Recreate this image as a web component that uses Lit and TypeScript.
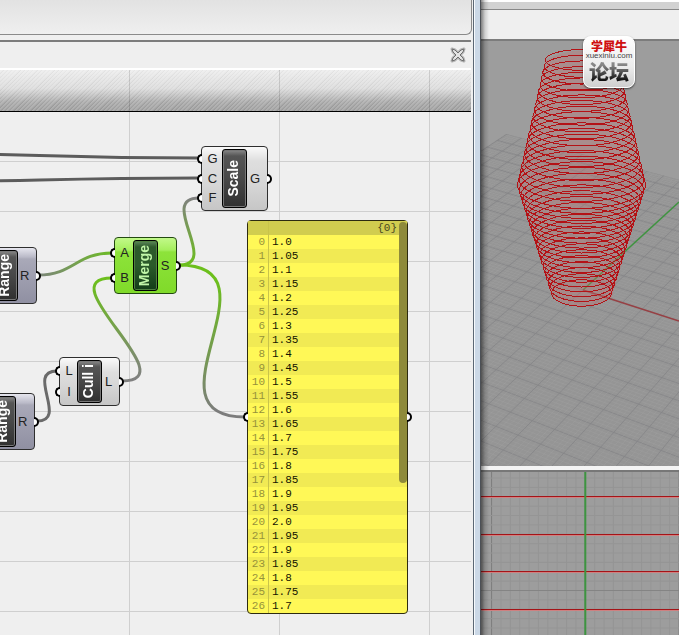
import { LitElement, html, svg, css } from "lit";
import { customElement, property } from "lit/decorators.js";

type Tone = "plain" | "selected" | "slate";

interface GraphNode {
  name: string;
  tone: Tone;
  x: number;
  y: number;
  w: number;
  h: number;
  inputs: string[];
  outputs: string[];
}

interface Wire {
  from: [number, number];
  to: [number, number];
  pull: number;
  stroke: string;
}

const NODES: GraphNode[] = [
  { name: "Scale", tone: "plain", x: 201, y: 34, w: 67, h: 65, inputs: ["G", "C", "F"], outputs: ["G"] },
  { name: "Merge", tone: "selected", x: 114, y: 125, w: 63, h: 57, inputs: ["A", "B"], outputs: ["S"] },
  { name: "Cull i", tone: "plain", x: 59, y: 245, w: 61, h: 49, inputs: ["L", "I"], outputs: ["L"] },
  { name: "Range", tone: "slate", x: -27, y: 135, w: 64, h: 57, inputs: [], outputs: ["R"] },
  { name: "Range", tone: "slate", x: -29, y: 281, w: 64, h: 57, inputs: [], outputs: ["R"] },
];

const WIRES: Wire[] = [
  { from: [-120, 41], to: [199, 46], pull: 150, stroke: "#5c5c5c" },
  { from: [-120, 70], to: [199, 66], pull: 150, stroke: "#5c5c5c" },
  { from: [38, 163], to: [112, 141], pull: 36, stroke: "url(#w-range)" },
  { from: [122, 269], to: [112, 166], pull: 66, stroke: "url(#w-cull)" },
  { from: [37, 309], to: [57, 259], pull: 32, stroke: "#6a6a6a" },
  { from: [179, 153], to: [199, 86], pull: 42, stroke: "url(#w-scale)" },
  { from: [179, 153], to: [245, 305], pull: 106, stroke: "url(#w-panel)" },
];

const VALUES = Array.from({ length: 27 }, (_, i) => {
  const text = (i <= 20 ? 1 + i * 0.05 : 2 - (i - 20) * 0.05).toFixed(2);
  return text.endsWith("0") ? text.slice(0, -1) : text;
});

@customElement("graph-node")
class GraphNodeView extends LitElement {
  @property({ attribute: false }) node!: GraphNode;

  static styles = css`
    :host { display: block; }
    .body {
      box-sizing: border-box; width: 100%; height: 100%;
      display: grid; grid-template-columns: 1fr 25px 1fr;
      padding: 2px 0; border: 1px solid #2e2e2e; border-radius: 4px;
      font: 13px/16px "Liberation Sans", sans-serif; color: #222;
    }
    .plain { background: linear-gradient(#fafafa 0, #dedede 14px, #d6d6d6 60%, #c6c6c6); }
    .slate { background: linear-gradient(#e6e6ee 0, #babac8 9px, #a9a9b8 11px, #9090a2); }
    .selected { background: linear-gradient(#c2f98a 0, #a5ef5d 12px, #8de33a 14px, #80da2a); border-color: #234a10; }
    .side { display: flex; flex-direction: column; }
    .port { flex: 1; position: relative; display: flex; align-items: center; justify-content: center; }
    .outputs .port { padding-right: 4px; }
    .inputs .port { padding-left: 1px; }
    .port::after {
      content: ""; position: absolute; top: calc(50% - 5px);
      box-sizing: border-box; width: 5px; height: 10px;
      border: 2px solid #000; background: #fff;
    }
    .inputs .port::after { right: 100%; border-right: 0; border-radius: 5px 0 0 5px; }
    .outputs .port::after { left: 100%; border-left: 0; border-radius: 0 5px 5px 0; }
    .title {
      display: flex; align-items: center; justify-content: center; overflow: hidden;
      padding-right: 3px;
      border: 1px solid #000; border-radius: 3px; box-shadow: inset 0 0 0 1px #777;
      background: linear-gradient(#8a8a8a 0, #555 6px, #484848 50%, #303030);
      color: #fff; font-weight: bold; font-size: 14px;
    }
    .selected .title {
      background: linear-gradient(#5f8a5c 0, #2d5a2b 6px, #2b5a2a 50%, #123d18);
      box-shadow: inset 0 0 0 1px #4f8040; color: #c0f5a8;
    }
    .title span { writing-mode: vertical-rl; transform: rotate(180deg); white-space: nowrap; }
  `;

  render() {
    const n = this.node;
    return html`
      <div class="body ${n.tone}">
        <div class="side inputs">${n.inputs.map((p) => html`<div class="port">${p}</div>`)}</div>
        <div class="title"><span>${n.name}</span></div>
        <div class="side outputs">${n.outputs.map((p) => html`<div class="port">${p}</div>`)}</div>
      </div>
    `;
  }
}

@customElement("value-panel")
class ValuePanel extends LitElement {
  static styles = css`
    :host { display: block; }
    .panel {
      position: relative; border: 1px solid #2d2b10; border-radius: 4px;
      background: #fff857; font: 11px/14px "Liberation Mono", monospace;
    }
    table { width: 100%; border-collapse: collapse; table-layout: fixed; }
    th, td { height: 14px; padding: 0; font-weight: normal; }
    thead { background: #d1cd4f; }
    .path { text-align: right; padding-right: 10px; color: #4a4820; }
    .index { width: 17px; padding-right: 3px; text-align: right; color: #96923a; border-right: 1px solid #c9c44a; }
    .value { padding-left: 3px; color: #141400; }
    tbody tr:nth-child(even) { background: #f1ea54; }
    .thumb {
      position: absolute; top: 1px; right: 0; width: 8px; height: 66.7%;
      border-radius: 4px; background: #8e8a3a;
    }
    .grip {
      position: absolute; top: calc(50% - 5px); box-sizing: border-box;
      width: 5px; height: 10px; border: 2px solid #000; background: #fff;
    }
    .in { right: 100%; border-right: 0; border-radius: 5px 0 0 5px; }
    .out { left: 100%; border-left: 0; border-radius: 0 5px 5px 0; }
  `;

  render() {
    return html`
      <div class="panel">
        <table>
          <thead><tr><th class="index"></th><th class="path" scope="col">{0}</th></tr></thead>
          <tbody>
            ${VALUES.map((v, i) => html`<tr><th class="index" scope="row">${i}</th><td class="value">${v}</td></tr>`)}
          </tbody>
        </table>
        <div class="thumb"></div>
        <div class="grip in"></div>
        <div class="grip out"></div>
      </div>
    `;
  }
}

@customElement("model-view")
class ModelView extends LitElement {
  static styles = css`
    :host { display: block; overflow: hidden; background: #9d9d9d; }
    svg { display: block; width: 100%; height: 100%; }
    .major { stroke: #868688; stroke-width: 1; stroke-opacity: 0.85; }
    .minor { stroke: #a8a8a8; stroke-width: 1; stroke-opacity: 0.25; }
    .ring { fill: none; stroke: #b41216; stroke-width: 1; shape-rendering: crispEdges; }
  `;

  /* Ground plane: both families of lines run to a point on the horizon. */
  private ground() {
    const horizon = -491;
    const families = [
      { vx: -2189, step: 43 },
      { vx: 909, step: 26 },
    ];
    const reach = (vx: number, x: number) => {
      const k = 1000 / (249 - horizon);
      return [x + (x - vx) * k, 249 + 1000];
    };
    return families.map(({ vx, step }, f) => {
      const lines = [];
      for (let i = -150; i <= 60; i++) {
        const at = 102 + ((f === 0 ? -i : i) * step) / 5;
        const [x2, y2] = reach(vx, at);
        const major = i % 5 === 0;
        lines.push(svg`<line class=${major ? "major" : "minor"} x1=${vx} y1=${horizon} x2=${x2} y2=${y2} />`);
      }
      return lines;
    });
  }

  /* 41 circles stacked upward: radius grows to double, then shrinks back. */
  private rings() {
    return Array.from({ length: 41 }, (_, i) => {
      const grow = i <= 20 ? i / 20 : (40 - i) / 20;
      const base = 30 + (i / 40) * 6;
      const rx = base + grow * 31;
      const cy = i <= 20 ? 252 - i * 5.4 : 144 - (i - 20) * 6.25;
      const ry = rx * (0.44 - (i / 40) * 0.15);
      return svg`<ellipse class="ring" cx="100.5" cy=${cy} rx=${rx} ry=${ry} />`;
    });
  }

  render() {
    return html`
      <svg viewBox="0 0 198 425" preserveAspectRatio="xMidYMin slice" role="img" aria-label="Perspective view">
        <defs>
          <clipPath id="floor"><path d="M25 93 L-400 374 V1200 H900 V324 Z" /></clipPath>
        </defs>
        <g clip-path="url(#floor)">
          <rect x="-400" y="0" width="1300" height="1200" fill="#959595" />
          ${this.ground()}
        </g>
        <path d="M102 249 L198 161" stroke="#3f9440" stroke-width="1.5" />
        <path d="M102 249 L198 280" stroke="#974044" stroke-width="1.5" />
        <path d="M65 19 L36 144 L71 256 Q101 275 131 256 L164 144 L136 19 Q100 0 65 19Z" fill="#c07070" fill-opacity="0.35" />
        ${this.rings()}
      </svg>
    `;
  }
}

@customElement("front-view")
class FrontView extends LitElement {
  static styles = css`
    :host { display: block; overflow: hidden; background: #9d9d9d; }
    svg { display: block; width: 100%; height: 100%; }
  `;

  render() {
    const cell = 9.37;
    const cols = Array.from({ length: 24 }, (_, i) => i - 12);
    const rows = Array.from({ length: 20 }, (_, i) => i - 13);
    return html`
      <svg viewBox="0 0 198 163" preserveAspectRatio="xMidYMin slice" role="img" aria-label="Front view">
        ${cols.map((i) => svg`<path d="M${104.3 + i * cell} 0V400" stroke=${i % 10 === 0 ? "#7c7c7c" : "#959595"} />`)}
        ${rows.map((i) => svg`<path d="M-200 ${118.5 + i * cell}H400" stroke=${i === 0 ? "#848484" : "#959595"} />`)}
        ${[24, 62, 99, 137].map(
          (y) => svg`
            <path d="M-200 ${y + 1.5}H400" stroke="#cf8080" />
            <path d="M-200 ${y + 0.5}H400" stroke="#a41418" />`
        )}
        <path d="M104.3 0V400" stroke="#3d9440" stroke-width="2" />
      </svg>
    `;
  }
}

@customElement("app-root")
class AppRoot extends LitElement {
  static styles = css`
    :host {
      display: flex; min-height: 100vh; background: #efefef;
      font-family: "Liberation Sans", "Noto Sans CJK SC", sans-serif;
    }
    .editor { flex: 472 1 0; min-width: 0; display: flex; flex-direction: column; }
    .ribbon {
      height: 34px; border: 1px solid #8a8a8a; border-width: 0 1px 1px 0;
      border-radius: 0 0 6px 0; background: linear-gradient(#e2e2e2, #efefef);
    }
    .bar {
      display: flex; align-items: center; justify-content: flex-end;
      height: 26px; margin: 5px 1px 0 0; padding-right: 5px;
      border-top: 2px solid #7c7c7c;
    }
    .close { width: 16px; height: 16px; padding: 0; border: 0; background: none; }
    .close svg { display: block; }
    .hatch {
      height: 41px; margin-right: 1px; border-top: 2px solid #fff; border-bottom: 1px solid #000;
      background:
        repeating-linear-gradient(90deg, transparent 0 129px, #0002 129px 130px, transparent 130px 150px),
        repeating-linear-gradient(135deg, #ffffff30 0 1px, #ffffff10 2px, #0000000a 3px),
        linear-gradient(#ececec, #dadada 45%, #a6a6a6 78%, #9a9a9a);
    }
    .canvas {
      flex: 1; position: relative; overflow: hidden; margin-right: 1px;
      background:
        repeating-linear-gradient(90deg, transparent 0 129px, #cfcfcf 129px 130px, transparent 130px 150px),
        repeating-linear-gradient(transparent 0 49px, #cfcfcf 49px 50px),
        #efefef;
    }
    .wires { position: absolute; inset: 0; width: 100%; height: 100%; }
    .wire { fill: none; stroke-width: 3; }
    graph-node, value-panel { position: absolute; }
    .edge {
      flex: 0 0 9px;
      background: linear-gradient(90deg, #efefef 0 1px, #5b6774 1px 2px, #f6fafd 2px 3px, #cbd8e6 3px 8px, #4c5056 8px);
    }
    .modeler { flex: 198 1 0; min-width: 0; position: relative; display: flex; flex-direction: column; }
    .modeler::after {
      content: ""; position: absolute; inset: 0 auto 0 0; width: 8px;
      background: linear-gradient(90deg, #0007, #0002 50%, #0000);
    }
    .frame { height: 7px; border-top: 2px solid #fff; border-bottom: 1px solid #888; background: #d2d2d2; }
    .tools { height: 29px; border-bottom: 2px solid #7c7c7c; background: #efefef; }
    model-view { flex: 425 1 0; }
    .split { height: 4px; background: #f4f4f4; border-bottom: 2px solid #777; }
    front-view { flex: 163 1 0; }
    .badge {
      position: absolute; top: 36px; left: 102px; z-index: 1;
      display: flex; flex-direction: column; align-items: center;
      box-sizing: border-box; width: 52px; height: 52px; padding-top: 3px;
      border: 1px solid #fff; border-radius: 8px;
      background: linear-gradient(#fff, #ececec 60%, #cfcfcf); box-shadow: 0 1px 2px #0009;
      white-space: nowrap; text-decoration: none;
    }
    .brand { font: 900 12px/12px "Noto Sans CJK SC", sans-serif; color: #cf1010; }
    .host { font: 8px/8px "Liberation Sans", sans-serif; color: #444; }
    .forum {
      font: 900 20px/24px "Noto Sans CJK SC", sans-serif; color: transparent;
      background: linear-gradient(#888 20%, #111 85%); background-clip: text; -webkit-background-clip: text;
    }
  `;

  render() {
    return html`
      <section class="editor">
        <div class="ribbon"></div>
        <div class="bar">
          <button class="close" aria-label="Close">
            <svg width="16" height="16" viewBox="0 0 16 16">
              <path d="M2 2l3 1 3 3 3-3 3-1-1 3-3 3 3 3 1 3-3-1-3-3-3 3-3 1 1-3 3-3-3-3z" fill="#e4e4e4" stroke="#b4b4b4" stroke-width="3" stroke-linejoin="round" />
              <path d="M2 2l3 1 3 3 3-3 3-1-1 3-3 3 3 3 1 3-3-1-3-3-3 3-3 1 1-3 3-3-3-3z" fill="#e4e4e4" stroke="#6e6e6e" stroke-linejoin="round" />
            </svg>
          </button>
        </div>
        <div class="hatch"></div>
        <div class="canvas">
          <svg class="wires">
            <defs>
              ${this.fade("w-range", 38, 163, 112, 141, "#7c857a", "#6dbb26")}
              ${this.fade("w-cull", 125, 269, 105, 166, "#808080", "#6cbf1c")}
              ${this.fade("w-scale", 185, 153, 195, 86, "#6cbf1c", "#808080")}
              ${this.fade("w-panel", 190, 173, 215, 300, "#6cbf1c", "#7c7c7c")}
            </defs>
            ${WIRES.map(({ from: [x1, y1], to: [x2, y2], pull, stroke }) =>
              svg`<path class="wire" stroke=${stroke} d="M${x1} ${y1}C${x1 + pull} ${y1} ${x2 - pull} ${y2} ${x2} ${y2}" />`)}
          </svg>
          ${NODES.map((n) => html`
            <graph-node .node=${n} style="left:${n.x}px;top:${n.y}px;width:${n.w}px;height:${n.h}px"></graph-node>`)}
          <value-panel style="left:247px;top:108px;width:161px"></value-panel>
        </div>
      </section>
      <div class="edge"></div>
      <section class="modeler">
        <div class="frame"></div>
        <div class="tools"></div>
        <model-view></model-view>
        <div class="split"></div>
        <front-view></front-view>
        <a class="badge" href="#forum">
          <span class="brand">学犀牛</span>
          <span class="host">xuexiniu.com</span>
          <span class="forum">论坛</span>
        </a>
      </section>
    `;
  }

  private fade(id: string, x1: number, y1: number, x2: number, y2: number, a: string, b: string) {
    return svg`
      <linearGradient id=${id} gradientUnits="userSpaceOnUse" x1=${x1} y1=${y1} x2=${x2} y2=${y2}>
        <stop offset="0" stop-color=${a} /><stop offset="1" stop-color=${b} />
      </linearGradient>`;
  }
}
